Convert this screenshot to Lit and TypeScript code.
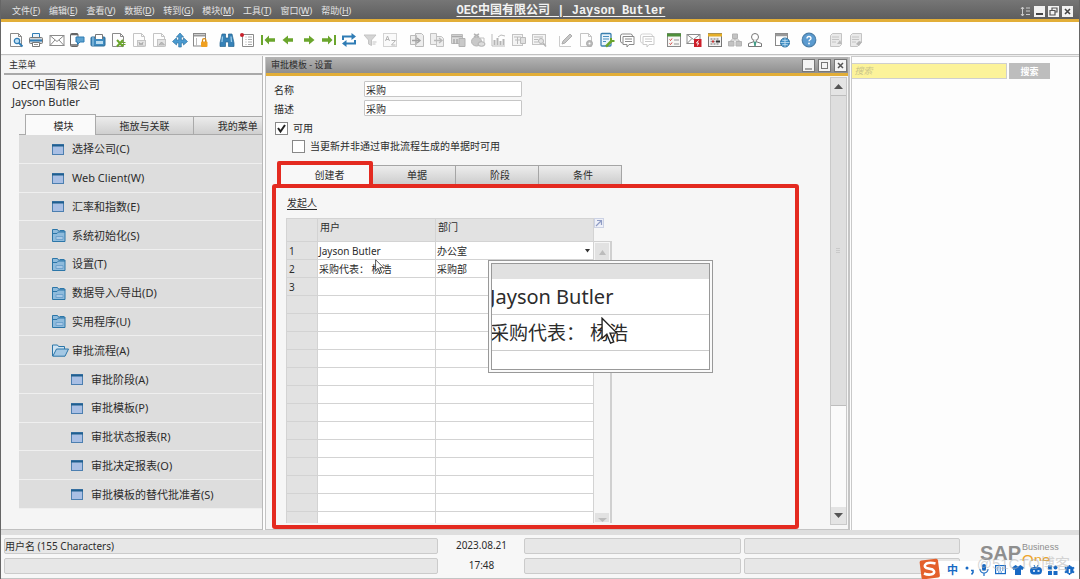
import { LitElement, html, svg, css } from "lit";
import { customElement, property } from "lit/decorators.js";
import { classMap } from "lit/directives/class-map.js";

const BLUE = "#2f7cb5";
const GREEN = "#6aa52c";
const LINE = "#8a8a8a";
const PALE = "#c4c4c4";

const sheet = (c: string) => svg`<path d="M2.5 1.5h8l3 3v10h-11z" fill="#fdfdfd" stroke=${c}/><path d="M10.5 1.5v3h3" fill="none" stroke=${c}/>`;

const glyphs: Record<string, unknown> = {
  preview: svg`${sheet(LINE)}<circle cx="9" cy="9" r="2.7" fill="#bfe0f5" stroke=${BLUE} stroke-width="1.2"/><path d="M11 11l3.5 3.5" stroke=${BLUE} stroke-width="1.8"/>`,
  print: svg`<path d="M4.500 5V1.500h7V5" fill="#eaf3fa" stroke=${BLUE}/><rect x="1.500" y="5.500" width="13" height="6" rx="1" fill="#d3d6d9" stroke="#777"/><path d="M2 8.500h12" stroke=${BLUE} stroke-width="2"/><path d="M4.500 10.500h7v4h-7z" fill="#fff" stroke="#777"/><path d="M6 12.500h4" stroke="#999"/>`,
  mail: svg`<rect x="1" y="3.500" width="14" height="10" fill="#fff" stroke=${LINE}/><path d="M1 3.500l7 6 7-6M1 13.500l5-5.500M15 13.500L10 8" fill="none" stroke=${LINE}/>`,
  phone: svg`<rect x="1.500" y="1.500" width="7.500" height="13" rx="1" fill="#fff" stroke="#666"/><path d="M2 2.500h7M2 13h7" stroke="#666" stroke-width="1.500"/><path d="M7 5h8v5h-4l-2.500 2.500V10H7z" fill="#5da2cf" stroke=${BLUE}/>`,
  fax: svg`<rect x="1" y="5" width="14" height="9" rx="1" fill="#3f8bc0" stroke="#2b6a97"/><path d="M5.500 7V2.500h7V7" fill="#fff" stroke="#777"/><rect x="6" y="9" width="7" height="3" fill="#b9dcf0"/><path d="M3 5v9" stroke="#a9d1ea"/>`,
  excel: svg`${sheet(LINE)}<path d="M7 8l6 6.500M13 8l-6 6.500" stroke=${GREEN} stroke-width="2"/><path d="M12 10.500h3.500M12 12.500h3.500" stroke=${GREEN}/>`,
  word: svg`${sheet(PALE)}<rect x="6.500" y="8.500" width="8" height="5.500" fill="#e3e3e3" stroke=${PALE}/><path d="M8 10l1 3 1-2 1 2 1-3" fill="none" stroke="#aaa"/>`,
  image: svg`${sheet(PALE)}<rect x="6.500" y="7.500" width="8" height="6.500" fill="#e3e3e3" stroke=${PALE}/><path d="M8 13l2.500-3 3 3" fill="#bbb" stroke="#aaa"/>`,
  move: svg`<path d="M8 1l3.500 4H9.300v3h2.200V5.800L15.500 9.500l-4 3.500v-2H9.300v4H6.700v-4H4.500v2L.5 9.500l4-3.700V8h2.200V5H4.500z" fill="#4a9ad0" stroke="#2f75a6" stroke-width=".7"/>`,
  lock: svg`<rect x="1.500" y="1.500" width="12" height="12.500" fill="#fff" stroke="#888"/><path d="M2 3.500h11" stroke="#999" stroke-width="2"/><path d="M4.500 6v8" stroke="#bbb"/><rect x="9" y="9.500" width="6.500" height="5.500" rx="1" fill="#f0a020"/><path d="M10.500 10V8.300a1.700 1.700 0 013.400 0V10" fill="none" stroke="#d98b12" stroke-width="1.200"/>`,
  find: svg`<path d="M3 2h3.500v4h3V2H13l2 9v3.500H9.500V10h-3v4.500H1V11z" fill="#3682b8" stroke="#25648f" stroke-width=".7"/><path d="M3.500 4.500L3 10M12 4.500l.5 5.500" stroke="#9accea" stroke-width="1.300"/>`,
  report: svg`<path d="M3.500 2.500h11v12h-11z" fill="#fff" stroke=${LINE}/><path d="M6.500 5h1M9 5h4M6.500 7.500h1M9 7.500h4M6.500 10h1M9 10h4M6.500 12.500h1M9 12.500h4" stroke="#aaa"/><circle cx="3" cy="3" r="2" fill="#c9202b"/>`,
  first: svg`<path d="M2 3v10" stroke=${GREEN} stroke-width="2"/><path d="M4.500 8l4.500-4.500V6.300h6v3.400H9v2.800z" fill=${GREEN}/>`,
  prev: svg`<path d="M2.500 8L8 3.500v2.800h5v3.400H8v2.800z" fill=${GREEN}/>`,
  next: svg`<path d="M13.500 8L8 3.500v2.800H3v3.400h5v2.800z" fill=${GREEN}/>`,
  last: svg`<path d="M14 3v10" stroke=${GREEN} stroke-width="2"/><path d="M11.500 8L7 3.500v2.800H1v3.400h6v2.800z" fill=${GREEN}/>`,
  refresh: svg`<path d="M2 8V4.500h9M14 8v3.500H5" fill="none" stroke=${BLUE} stroke-width="2"/><path d="M10.500 1l4.500 3.500L10.500 8zM5.500 8L1 11.500 5.500 15z" fill=${BLUE}/>`,
  filter: svg`<path d="M2 3h12L9.500 8v5.500l-3-1.500V8z" fill="#d4d4d4" stroke=${PALE}/><path d="M10.500 10h4M10.500 12h3" stroke=${PALE}/>`,
  sort: svg`<rect x="1.500" y="1.500" width="13" height="13" fill="#fafafa" stroke="#d4d4d4"/><path d="M3.500 9L5.500 4l2 5M4 7.500h3M9.500 8.500h4l-4 4.500h4" fill="none" stroke="#b5b5b5"/>`,
  baseDoc: svg`<path d="M1.500 3.500h6v9h-6zM6.500 1.500h6l2 2v11h-8z" fill="#eee" stroke="#bbb"/><path d="M3 8.500h7M8 6l3 2.500L8 11" fill="none" stroke="#a4a4a4" stroke-width="1.500"/>`,
  targetDoc: svg`<path d="M1.500 1.500h6v11h-6zM7.500 4.500h5l2 2v8h-7z" fill="#eee" stroke="#c2c2c2"/><path d="M5 8.500h7M10 6l3 2.500-3 2.500" fill="none" stroke="#b8b8b8" stroke-width="1.300"/>`,
  profit: svg`<path d="M1.500 2.500h11v9h-11z" fill="#ddd" stroke="#bbb"/><path d="M2 4.500h10M4 7v5M7 7v5" stroke="#aaa" stroke-width="1.500"/><path d="M9 6.500h6v8H9z" fill="#c9c9c9" stroke="#b2b2b2"/>`,
  payment: svg`<ellipse cx="6.500" cy="9.500" rx="5" ry="4.500" fill="#c9c9c9" stroke="#b5b5b5"/><path d="M4 2l5 3M9 2L4 5" stroke="#b5b5b5" stroke-width="1.500"/><ellipse cx="11.500" cy="12" rx="3.500" ry="2.300" fill="#ddd" stroke="#b0b0b0"/><path d="M10 6h4v4" fill="none" stroke="#c0c0c0"/>`,
  volume: svg`<path d="M2 2v12h13" fill="none" stroke="#bbb"/><path d="M4.500 13V8M7.500 13V6M10.500 13V9M13.500 13V7" stroke="#b5b5b5" stroke-width="2"/><path d="M8 5l3-2 4 1" fill="none" stroke="#bbb"/>`,
  journal: svg`<rect x="1.500" y="2.500" width="10" height="11" fill="#f4f4f4" stroke="#c4c4c4"/><path d="M3 5h7M6.500 5v7M4 8h5" stroke="#bbb"/><path d="M9.500 5.500h5v6h-5z" fill="#e0e0e0" stroke="#bbb"/>`,
  layout: svg`<rect x="1.500" y="2.500" width="13" height="10" fill="#f4f4f4" stroke="#c4c4c4"/><path d="M3 5h9M3 7.500h4M3 10h4" stroke="#bbb"/><circle cx="10" cy="9" r="2.500" fill="#e4e4e4" stroke="#b5b5b5"/><path d="M12 11l3 3.500" stroke="#b5b5b5" stroke-width="1.500"/>`,
  edit: svg`<path d="M1.500 4v10.500H13" fill="none" stroke="#ccc"/><path d="M4 12l1-3 7-7 2 2-7 7z" fill="#c6c6c6" stroke="#adadad"/>`,
  docGear: svg`${sheet(PALE)}<circle cx="11.500" cy="11.500" r="3" fill="#bbb" stroke="#aaa"/><circle cx="11.500" cy="11.500" r="1" fill="#fff"/>`,
  query: svg`<rect x="2" y="1.500" width="10" height="12.500" rx="1" fill="#eaf4fb" stroke="#3a7fae" stroke-width="1.300"/><path d="M4 4.500h6M4 7h6M4 9.500h3" stroke="#4b90bf"/><path d="M7 14.500l6-6" stroke=${GREEN} stroke-width="2.500"/><path d="M12 6v3h3.500" fill="none" stroke=${GREEN} stroke-width="2"/>`,
  chat: svg`<rect x="1.500" y="2" width="12" height="9" rx="2" fill="#fff" stroke=${LINE}/><path d="M4 4.500h11v8h-5l-2 2.500v-2.500H4z" fill="#fff" stroke=${LINE}/><path d="M6 7h7M6 9.500h7" stroke=${LINE}/>`,
  chatOff: svg`<rect x="1.500" y="2" width="12" height="9" rx="2" fill="#fff" stroke="#d4d4d4"/><path d="M4 4.500h11v8h-5l-2 2.500v-2.500H4z" fill="#fff" stroke="#cacaca"/><path d="M6 7h7M6 9.500h7" stroke="#cacaca"/>`,
  form: svg`<rect x="1.500" y="1.500" width="13" height="13" fill="#f7f7f4" stroke=${LINE}/><path d="M1 3h14" stroke="#4f8f3a" stroke-width="3"/><path d="M3.500 7.500l1 1 1.500-2M3.500 11.500l1 1 1.500-2" fill="none" stroke="#cf3a3a"/><path d="M8 8h5M8 12h5" stroke="#b5b5b5" stroke-width="1.500"/>`,
  alert: svg`<rect x="1" y="2.500" width="13" height="9" fill="#fff" stroke=${LINE}/><path d="M1 2.500l6.500 5 6.500-5M1 11.500l5-5" fill="none" stroke=${LINE}/><rect x="8" y="7" width="7.500" height="8" fill="#cc1f2a"/><path d="M12.500 8.500l-2 2.500h2l-1 2.500" fill="none" stroke="#fff"/>`,
  calendar: svg`<rect x="1.500" y="1.500" width="13" height="13" fill="#f4f4f4" stroke="#777"/><path d="M1 3h14" stroke="#e5ae27" stroke-width="3"/><path d="M3.500 7h9M3.500 9.500h9M3.500 12h9" stroke="#999" stroke-width="1.500" stroke-dasharray="2 1"/><path d="M9 9.500h4" stroke="#333" stroke-width="2"/><path d="M5 9.500h2" stroke="#c33" stroke-width="2"/>`,
  org: svg`<path d="M5.500 2h5v4.500h-5zM1.500 9.500H7V14H1.500zM9 9.500h5.500V14H9z" fill="#c3c3c3" stroke="#b3b3b3"/><path d="M8 6.500V8M4 9.500V8h8v1.500" fill="none" stroke="#b3b3b3"/>`,
  person: svg`<circle cx="8" cy="5" r="3.500" fill="#fff" stroke="#777"/><path d="M6.500 8.300v1.500L1.500 11.500v3h13v-3l-5-1.700V8.300" fill="#fff" stroke="#777"/><path d="M7 10l1 4 1-4z" fill="#3f9a84" stroke="#3f9a84"/>`,
  web: svg`<rect x="1.500" y="1.500" width="12" height="12" fill="#fff" stroke="#888"/><path d="M1.500 3h12" stroke="#999" stroke-width="2.500"/><circle cx="11" cy="10.500" r="4.500" fill="#3f8fc6" stroke="#2b6f9f"/><path d="M6.500 10.500h9M11 6v9M8 8q3 1.500 6 0M8 13q3-1.500 6 0" fill="none" stroke="#d5ebf8" stroke-width=".7"/>`,
  help: svg`<circle cx="8" cy="8" r="6.800" fill="#5b9bd0" stroke="#4c7fa8" stroke-width="1.200"/><path d="M6 6.500a2 2 0 114 0c0 1.300-2 1.300-2 2.800" fill="none" stroke="#fff" stroke-width="1.300"/><circle cx="8" cy="11.500" r=".9" fill="#fff"/>`,
  noteEdit: svg`<path d="M2.500 3.500l2-2h9v11l-2 2h-9z" fill="#e9e9e9" stroke=${PALE}/><path d="M4 5h7M4 7.500h7M4 10h4" stroke=${PALE}/><path d="M9 12l3-4 2 4z" fill="#bbb"/>`,
  noteDown: svg`<path d="M2.500 3.500l2-2h9v9l-4 4h-7z" fill="#e9e9e9" stroke=${PALE}/><path d="M4 5h7M4 7.500h7M4 10h4" stroke=${PALE}/><path d="M8 12l3-3 3 1-3 4z" fill="#b5b5b5"/>`,
};

const tools: Array<[string, Array<[string, string]>]> = [
  ["g10", [["preview", "预览"], ["print", "打印"], ["mail", "电子邮件"], ["phone", "短信"], ["fax", "传真"], ["excel", "导出到 Excel"], ["word", "导出到 Word"], ["image", "导出为图像"], ["move", "启动应用程序"], ["lock", "锁定屏幕"]]],
  ["g9", [["find", "查找"], ["report", "添加"], ["first", "第一条记录"], ["prev", "上一条记录"], ["next", "下一条记录"], ["last", "最后一条记录"], ["refresh", "刷新"], ["filter", "过滤"], ["sort", "排序"]]],
  ["g7", [["baseDoc", "基础凭证"], ["targetDoc", "目标凭证"], ["profit", "毛利"], ["payment", "付款方式"], ["volume", "体积和重量"], ["journal", "日记账"], ["layout", "布局"]]],
  ["g5", [["edit", "编辑"], ["docGear", "表格设置"], ["query", "查询"], ["chat", "消息"], ["chatOff", "回复"]]],
  ["g5", [["form", "表单"], ["alert", "警报"], ["calendar", "日历"], ["org", "组织"], ["person", "业务伙伴"]]],
  ["g1", [["web", "网络"]]],
  ["g1", [["help", "帮助"]]],
  ["g2", [["noteEdit", "编辑备注"], ["noteDown", "备注"]]],
];

@customElement("tool-glyph")
export class ToolGlyph extends LitElement {
  @property() name = "";
  static styles = css`
    :host { display: block; width: 16px; height: 16px; }
    svg { display: block; }
  `;
  render() {
    return html`<svg width="16" height="16" viewBox="0 0 16 16" aria-hidden="true">${glyphs[this.name]}</svg>`;
  }
}

@customElement("menu-bar")
export class MenuBar extends LitElement {
  static styles = css`
    :host { display: grid; grid-template-columns: 447fr auto 410fr; align-items: center; height: 22px; box-sizing: border-box; border-bottom: 3px solid #e2ae38; background: linear-gradient(#767676, #5e5e5e); color: #e4e4e4; padding: 0 6px 0 11px; }
    nav { display: flex; gap: 9px; padding-top: 2px; }
    nav button { all: unset; font-size: 9px; line-height: 16px; white-space: nowrap; }
    nav u { text-underline-offset: 1px; }
    .title { font: bold 12px/18px "Liberation Mono", "Noto Sans CJK SC", monospace; color: #f2f2f2; text-decoration: underline; text-underline-offset: 2px; white-space: nowrap; padding-top: 2px; }
    .win { display: flex; justify-content: flex-end; gap: 3px; padding-top: 2px; }
    .win button { all: unset; width: 11px; height: 11px; }
    svg { display: block; }
  `;
  render() {
    const items: Array<[string, string]> = [["文件", "F"], ["编辑", "E"], ["查看", "V"], ["数据", "D"], ["转到", "G"], ["模块", "M"], ["工具", "T"], ["窗口", "W"], ["帮助", "H"]];
    const box = svg`<rect width="11" height="11" fill="#f2f2f2"/>`;
    return html`
      <nav>${items.map(([t, k]) => html`<button>${t}(<u>${k}</u>)</button>`)}</nav>
      <div class="title">OEC中国有限公司 | Jayson Butler</div>
      <div class="win">
        <button aria-label="布局"><svg width="11" height="11"><path d="M2.500 1v9M1 3l1.500-2L4 3M1 8l1.500 2L4 8M6 2h4M6 5h4M6 8.500h4" fill="none" stroke="#ccc"/></svg></button>
        <button aria-label="最小化"><svg width="11" height="11">${box}<path d="M2 8h7" stroke="#444" stroke-width="2"/></svg></button>
        <button aria-label="还原"><svg width="11" height="11">${box}<path d="M4 4V2h5v4H7M2 4.500h5V9H2z" fill="none" stroke="#555" stroke-width="1.200"/></svg></button>
        <button aria-label="关闭"><svg width="11" height="11">${box}<path d="M3 3l5 5M8 3L3 8" stroke="#444" stroke-width="1.600"/></svg></button>
      </div>`;
  }
}

@customElement("tool-bar")
export class ToolBar extends LitElement {
  static styles = css`
    :host { display: flex; align-items: center; gap: 11px; height: 33px; padding: 3px 7px 0; box-sizing: border-box; background: #fefefe; border-bottom: 1px solid #c2c2c2; }
    .g { display: flex; justify-content: space-between; flex: none; }
    .g10 { width: 200px; }
    .g9 { width: 179px; }
    .g7 { width: 138px; }
    .g5 { width: 97px; }
    .g2 { width: 36px; }
    button { all: unset; }
  `;
  render() {
    return html`${tools.map(([cls, list]) => html`<div class="g ${cls}">${list.map(([n, l]) => html`<button aria-label=${l}><tool-glyph name=${n}></tool-glyph></button>`)}</div>`)}`;
  }
}

@customElement("module-menu")
export class ModuleMenu extends LitElement {
  static styles = css`
    :host { display: flex; flex-direction: column; min-height: 0; background: #f5f5f5; border-right: 1px solid #b9b9b9; border-bottom: 1px solid #c0c0c0; overflow: hidden; color: #2c2c2c; }
    h2 { margin: 0 0 0 3px; padding: 1px 5px 0; font-weight: 400; font-size: 9px; line-height: 16px; border-bottom: 2px solid #a9a9a9; }
    .who { padding: 1px 11px 0; font-size: 11px; line-height: 17px; }
    .tabs { display: flex; align-items: flex-end; padding: 4px 0 0 18px; }
    .tabs::before { content: ""; width: 6px; border-bottom: 1px solid #aaa; flex: none; }
    .tab { all: unset; box-sizing: border-box; text-align: center; font-size: 10px; line-height: 18px; height: 19px; border: 1px solid #aaa; border-left: 0; background: linear-gradient(#ececec, #cfcfcf); white-space: nowrap; flex: 98 0 0; }
    .tab.on { padding-left: 6px; flex: 64 0 0; height: 21px; line-height: 22px; background: #fafafa; border-left: 1px solid #aaa; border-bottom: 0; }
    .tab.cut { flex: 49 0 0; padding-left: 20px; border-right: 0; }
    ul { list-style: none; margin: 0 0 20px 18px; padding: 0; flex: 1; display: grid; grid-auto-rows: 1fr; min-height: 0; }
    li { background: #dddddd; border-bottom: 1px solid #efefef; display: flex; min-height: 0; }
    a { display: flex; flex: 1; align-items: center; padding: 1px 0 0 33px; color: inherit; text-decoration: none; font-size: 11px; line-height: 16px; }
    a.sub { padding-left: 52px; }
    svg { width: 20px; height: 13px; flex: none; }
  `;
  icon(kind: string) {
    if (kind === "open") return html`<svg viewBox="0 0 20 13"><path d="M.5 12V1h5l1 1.500h6V5" fill="#cfe3f2" stroke="#2c76a8"/><path d="M.8 12.200L4.500 5h12l-3.500 7.200z" fill="#a4c8e4" stroke="#2c76a8"/></svg>`;
    if (kind === "folder") return html`<svg viewBox="0 0 20 13"><path d="M.5.500h5l1 1.500H13v10.500H.5z" fill="#8fbbdc" stroke="#2c76a8"/><path d="M1 4.500h4l1.500-1.500H13M8 1.500h4" fill="none" stroke="#2c76a8"/><path d="M4 7.500h7v3H4z" fill="#a9c9e6" stroke="#6fa3cd"/></svg>`;
    return html`<svg viewBox="0 0 20 13"><rect x=".5" y="1.500" width="11" height="10" fill="#a9bfe4" stroke="#4c7fb0"/><path d="M0 2.500h12" stroke="#1f5f8f" stroke-width="2"/></svg>`;
  }
  render() {
    const rows: Array<[string, string]> = [
      ["win", "选择公司(C)"], ["win", "Web Client(W)"], ["win", "汇率和指数(E)"], ["folder", "系统初始化(S)"], ["folder", "设置(T)"],
      ["folder", "数据导入/导出(D)"], ["folder", "实用程序(U)"], ["open", "审批流程(A)"], ["sub", "审批阶段(A)"], ["sub", "审批模板(P)"],
      ["sub", "审批状态报表(R)"], ["sub", "审批决定报表(O)"], ["sub", "审批模板的替代批准者(S)"],
    ];
    return html`
      <h2>主菜单</h2>
      <div class="who">OEC中国有限公司<br />Jayson Butler</div>
      <div class="tabs"><button class="tab on">模块</button><button class="tab">拖放与关联</button><button class="tab cut">我的菜单</button></div>
      <ul>${rows.map(([k, t]) => html`<li><a href="#" class=${classMap({ sub: k === "sub" })}>${this.icon(k)}${t}</a></li>`)}</ul>`;
  }
}

const pointer = (w: number, h: number) => html`<svg width=${w} height=${h} viewBox="0 0 16 26" aria-hidden="true"><path d="M1 1v19l4.500-4 3.500 8.500 3-1.200L8.500 15H15z" fill="#fff" stroke="#222" stroke-width="1.300"/></svg>`;

@customElement("approval-window")
export class ApprovalWindow extends LitElement {
  static styles = css`
    :host { display: flex; flex-direction: column; min-width: 0; min-height: 0; background: #f6f6f6; border: 1px solid #c4c4c4; border-width: 0 2px 1px 1px; box-sizing: border-box; margin: 1px 1px 0 2px; color: #2c2c2c; font-size: 10px; }
    header { display: flex; align-items: center; justify-content: space-between; height: 19px; box-sizing: border-box; border-bottom: 3px solid #e2ae38; background: linear-gradient(#b4b4b4, #8f8f8f); padding: 0 1px 0 5px; font-size: 9px; line-height: 16px; }
    .ctl { display: flex; gap: 3px; }
    .ctl button { all: unset; width: 13px; height: 13px; }
    svg { display: block; }
    .body { flex: 1; display: flex; min-height: 0; }
    .page { flex: 1; display: flex; flex-direction: column; min-width: 0; min-height: 0; padding: 5px 31px 0 6px; }
    .field { display: grid; grid-template-columns: 90px 158px; align-items: center; height: 16px; margin: 0 0 3px 2px; }
    .field input { box-sizing: border-box; width: 100%; height: 16px; border: 1px solid #c6c6c6; border-radius: 1px; padding: 0 1px; background: #fff; font: inherit; color: inherit; }
    .check { display: flex; align-items: center; gap: 5px; height: 18px; padding-left: 3px; line-height: 14px; }
    .check.in { padding-left: 20px; }
    .check input { appearance: none; margin: 0; width: 13px; height: 13px; border: 1px solid #888; background: #fff; flex: none; }
    .check input:checked { background: #fff url("data:image/svg+xml,%3Csvg xmlns='http://www.w3.org/2000/svg' viewBox='0 0 11 11'%3E%3Cpath d='M2 5l2.500 3.500L9 2' fill='none' stroke='%23222' stroke-width='2'/%3E%3C/svg%3E") center / 11px 11px no-repeat; }
    .tabs { display: flex; align-items: flex-end; margin: 6px 0 -4px 5px; position: relative; z-index: 1; }
    .tab { all: unset; box-sizing: border-box; width: 83px; height: 19px; margin-bottom: 4px; padding-left: 6px; text-align: center; line-height: 19px; background: linear-gradient(#ededed, #cdcdcd); border: 1px solid #a5a5a5; border-left: 0; border-bottom: 0; }
    .tab.on { width: 96px; height: 27px; margin: 0; padding-left: 9px; line-height: 21px; border: 4px solid #e42a20; border-radius: 2px; background: #f8f8f8; }
    .panel { position: relative; flex: 1; min-height: 0; display: flex; flex-direction: column; border: 4px solid #e42a20; border-radius: 3px; padding: 6px 10px 2px; }
    .lead { font-size: 10px; line-height: 18px; text-decoration: underline; text-underline-offset: 2px; margin: 0 0 6px 1px; }
    .grid { flex: 1; min-height: 0; display: flex; overflow: hidden; }
    .sheet { flex: 0 0 308px; overflow: hidden; }
    table { width: 100%; border-collapse: collapse; table-layout: fixed; }
    .no { width: 31px; }
    .user { width: 118px; }
    th, td { box-sizing: border-box; border: 1px solid #d3d3d3; padding: 0 1px; text-align: left; font-weight: 400; font-size: 10px; line-height: 14px; background: #fff; white-space: nowrap; }
    td { height: 18px; }
    th { background: #e2e2e2; height: 23px; padding: 0 2px 6px; }
    td.n { background: #e2e2e2; padding-left: 2px; }
    td.d { padding-right: 3px; }
    .pick { display: flex; justify-content: space-between; align-items: center; }
    .side { width: 18px; display: flex; flex-direction: column; }
    .link { all: unset; display: flex; align-items: flex-start; height: 23px; }
    .rail { flex: 1; min-height: 0; display: flex; flex-direction: column; justify-content: space-between; border: 1px solid #d0d0d0; border-width: 1px 2px 0 0; box-sizing: border-box; background: #f6f6f6; }
    .rail button { all: unset; height: 18px; background: #e2e2e2; margin: 1px; }
    .rail button:last-child { height: 9px; }
    .bar { width: 17px; margin: 1px 1px 4px 0; display: flex; flex-direction: column; border: 1px solid #c9c9c9; background: #fafafa; box-sizing: border-box; flex: none; }
    .bar button { all: unset; height: 17px; background: #e4e4e4; display: grid; place-items: center; }
    .thumb { height: 311px; background: #dedede; border: 1px solid #bdbdbd; border-width: 1px 0; box-sizing: border-box; display: grid; place-items: center; }
    .fill { flex: 1; }
    .cursor { position: absolute; left: 99px; top: 71px; }
    .zoom { position: absolute; left: 212px; top: 72px; width: 225px; height: 113px; box-sizing: border-box; border: 1px solid #999; background: #fafafa; padding: 2px; }
    .lens { position: relative; box-sizing: border-box; height: 100%; border: 1px solid #999; background: #fff; overflow: hidden; font-size: 20px; line-height: 36px; white-space: nowrap; }
    .lens .top { height: 15px; background: #e1e1e1; }
    .lens .row { height: 36px; border-bottom: 1px solid #ccc; box-sizing: border-box; text-indent: -2px; }
    .lens .cjk { font-size: 19px; }
    .lens svg { position: absolute; left: 109px; top: 53px; }
  `;
  render() {
    const data = [["Jayson Butler", "办公室"], ["采购代表： 杨浩", "采购部"]];
    const rows = Array.from({ length: 16 }, (_, i) => ({ n: i < 3 ? i + 1 : "", user: data[i]?.[0] ?? "", dept: data[i]?.[1] ?? "" }));
    const box = svg`<rect x=".5" y=".5" width="12" height="12" fill="#f4f4f4" stroke="#777"/>`;
    return html`
      <header>
        <span>审批模板 - 设置</span>
        <span class="ctl">
          <button aria-label="最小化"><svg width="13" height="13">${box}<path d="M3 10h7" stroke="#555"/></svg></button>
          <button aria-label="最大化"><svg width="13" height="13">${box}<rect x="3.500" y="3.500" width="6" height="6" fill="none" stroke="#777"/></svg></button>
          <button aria-label="关闭"><svg width="13" height="13">${box}<path d="M4 4l5 5M9 4L4 9" stroke="#555" stroke-width="1.500"/></svg></button>
        </span>
      </header>
      <div class="body">
        <div class="page">
          <div class="field"><label for="name">名称</label><input id="name" value="采购" /></div>
          <div class="field"><label for="desc">描述</label><input id="desc" value="采购" /></div>
          <label class="check"><input type="checkbox" checked />可用</label>
          <label class="check in"><input type="checkbox" />当更新并非通过审批流程生成的单据时可用</label>
          <div class="tabs">
            <button class="tab on">创建者</button><button class="tab">单据</button><button class="tab">阶段</button><button class="tab">条件</button>
          </div>
          <section class="panel">
            <div class="lead">发起人</div>
            <div class="grid">
              <div class="sheet">
                <table>
                  <thead><tr><th class="no"></th><th class="user">用户</th><th>部门</th></tr></thead>
                  <tbody>${rows.map((r, i) => html`<tr><td class="n">${r.n}</td><td>${r.user}</td><td class="d">${i === 0 ? html`<div class="pick">${r.dept}<svg width="5" height="4"><path d="M0 0h5L2.500 3.500z" fill="#333"/></svg></div>` : r.dept}</td></tr>`)}</tbody>
                </table>
              </div>
              <div class="side">
                <button class="link" aria-label="展开"><svg width="10" height="10"><rect x=".5" y=".5" width="9" height="9" fill="#eef0f8" stroke="#ccd2e4"/><path d="M2 8l5-5M3 2.500h4.500V7" fill="none" stroke="#8f9cc4" stroke-width="1.200"/></svg></button>
                <div class="rail">
                  <button aria-label="向上"><svg width="14" height="16"><path d="M4 11h7L7.500 6z" fill="#bcbcbc"/></svg></button>
                  <button aria-label="向下"><svg width="14" height="9"><path d="M3 5h9L7.500 9z" fill="#bcbcbc"/></svg></button>
                </div>
              </div>
            </div>
            <div class="cursor">${pointer(9, 15)}</div>
            <div class="zoom"><div class="lens"><div class="top"></div><div class="row">Jayson Butler</div><div class="row cjk">采购代表： 杨浩</div>${pointer(17, 28)}</div></div>
          </section>
        </div>
        <div class="bar">
          <button aria-label="向上滚动"><svg width="9" height="5"><path d="M0 5h9L4.500 0z" fill="#555"/></svg></button>
          <div class="thumb"><svg width="4" height="6"><path d="M1 0v6M3 0v6" stroke="#b5b5b5" stroke-dasharray="1 1"/></svg></div>
          <div class="fill"></div>
          <button aria-label="向下滚动"><svg width="9" height="5"><path d="M0 0h9L4.500 5z" fill="#555"/></svg></button>
        </div>
      </div>`;
  }
}

@customElement("status-bar")
export class StatusBar extends LitElement {
  static styles = css`
    :host { position: relative; display: grid; grid-template-columns: 435fr 80px 217fr 216fr 116px; grid-template-rows: 16px 16px; column-gap: 3px; row-gap: 4px; height: 49px; box-sizing: border-box; padding: 3px 0 0 3px; background: #f7f7f7; border-top: 5px solid #dedede; border-bottom: 1px solid #c4c4c4; color: #2c2c2c; font-size: 10px; line-height: 15px; }
    .f { box-sizing: border-box; background: #e7e7e7; border: 1px solid #cbcbcb; border-radius: 2px; white-space: nowrap; }
    .c { text-align: center; }
    .logo { grid-column: 5; grid-row: 1 / 3; display: flex; gap: 1px; padding-left: 17px; padding-top: 4px; }
    .sap { font: bold 20px/22px "Liberation Sans", sans-serif; color: #8e8e8e; }
    .biz { font: 9px/11px "Liberation Sans", sans-serif; color: #8e8e8e; }
    .one { display: block; color: #eda52a; font: 15px/13px "Liberation Sans", sans-serif; }
    .ime { position: absolute; right: 0; bottom: -1px; height: 18px; width: 157px; box-sizing: border-box; display: flex; align-items: center; justify-content: space-between; padding: 0 4px 0 25px; background: #fffffff0; }
    .ime svg { display: block; }
    .ime b { color: #1769c4; font-size: 11px; line-height: 12px; }
    .mark { position: absolute; right: 9px; bottom: 5px; font: 15px/18px "Liberation Sans", "Noto Sans CJK SC", sans-serif; color: #b4b4b48c; white-space: nowrap; }
    .sogou { position: absolute; left: -4px; bottom: -2px; }
  `;
  render() {
    const B = "#1769c4";
    return html`
      <div class="f">用户名 (155 Characters)</div><div class="c">2023.08.21</div><div class="f"></div><div class="f"></div>
      <div class="logo"><span class="sap">SAP</span><span class="biz">Business<span class="one">One</span></span></div>
      <div class="f"></div><div class="c">17:48</div><div class="f"></div><div class="f"></div>
      <div class="ime">
        <svg class="sogou" width="24" height="24" viewBox="0 0 24 24"><rect x="2.500" y="2.500" width="18.500" height="19" rx="2" transform="rotate(-7 12 12)" fill="#e4602c"/><path d="M17.500 6.500Q12 5 8.500 6.500q-3.500 2.500 0 4.500l6 1.500q3.500 2.500 0 4.500-4 1.500-8.500-.5" fill="none" stroke="#fff" stroke-width="2.600"/></svg>
        <b>中</b>
        <svg width="10" height="12"><circle cx="3" cy="4" r="1.500" fill=${B}/><path d="M7 6.500h2v2L7.500 10.500" fill="none" stroke=${B} stroke-width="1.500"/></svg>
        <svg width="10" height="12"><rect x="3" y="0" width="4" height="7" rx="2" fill=${B}/><path d="M1 5a4 4 0 008 0M5 9v3" fill="none" stroke=${B} stroke-width="1.200"/></svg>
        <svg width="11" height="12"><rect x=".6" y="1.600" width="9.800" height="8" fill="none" stroke=${B} stroke-width="1.200"/><path d="M2 4h7M2 6h7M3 8h5" stroke=${B} stroke-dasharray="1.500 1"/></svg>
        <svg width="12" height="12"><path d="M3.500 1l2.500 1.500L8.500 1 12 3.500 10.500 6 9 5.500V11H3V5.500L1.500 6 0 3.500z" fill=${B}/></svg>
        <svg width="12" height="12"><rect x="0" y="3" width="12" height="7.500" rx="3.700" fill=${B}/><path d="M4 1l1 2M8 1L7 3" stroke=${B}/><path d="M3 7h2M7.500 7h2" stroke="#fff" stroke-width="1.500"/></svg>
        <svg width="11" height="12"><path d="M1 1.500h4v4H1zM1 7h4v4H1zM6.500 7h4v4h-4z" fill=${B}/><circle cx="8.500" cy="3.500" r="2" fill=${B}/></svg>
        <svg width="11" height="12"><circle cx="5.500" cy="6" r="4" fill=${B}/><path d="M5.500 1v10M.8 3.500l9.400 5M.8 8.500l9.400-5" stroke=${B} stroke-width="1.500"/><path d="M5.500 5v4" stroke="#fff" stroke-width="1.500"/></svg>
      </div>
      <div class="mark">@51CTO博客</div>`;
  }
}

@customElement("app-root")
export class AppRoot extends LitElement {
  static styles = css`
    :host { display: flex; flex-direction: column; height: 100vh; min-height: 440px; box-sizing: border-box; border: 1px solid #666; border-width: 0 1px; overflow: hidden; background: #fdfdfd; font-family: "Noto Sans", "Noto Sans CJK SC", sans-serif; }
    main { flex: 1; min-height: 0; display: grid; grid-template-columns: 262px minmax(0, 18fr) minmax(0, 7fr); grid-template-rows: minmax(0, 1fr); border-top: 1px solid #ededed; }
    aside { border-left: 1px solid #c9c9c9; border-top: 1px solid #ccc; background: #fdfdfd; padding: 6px 29px 0 0; }
    form { display: flex; gap: 2px; height: 16px; }
    form input { flex: 1; min-width: 0; box-sizing: border-box; border: 1px solid #cfcfcf; border-left: 0; background: #fcf39a; padding: 0 3px; font: italic 9px/14px "Noto Sans CJK SC", sans-serif; }
    form input::placeholder { color: #c9c38a; opacity: 1; }
    form button { border: 0; padding: 0; width: 41px; background: #bdbdbd; color: #fff; font: bold 9px/15px "Noto Sans CJK SC", sans-serif; }
  `;
  render() {
    return html`
      <menu-bar></menu-bar>
      <tool-bar></tool-bar>
      <main>
        <module-menu></module-menu>
        <approval-window></approval-window>
        <aside><form><input aria-label="搜索内容" placeholder="搜索" /><button type="button">搜索</button></form></aside>
      </main>
      <status-bar></status-bar>`;
  }
}
